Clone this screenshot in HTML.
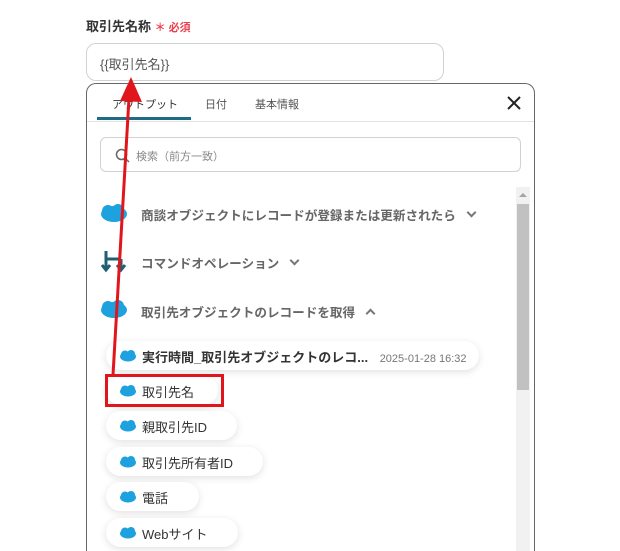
<!DOCTYPE html>
<html style="width:620px;height:551px;overflow:hidden"><head><meta charset="utf-8"><style>
*{margin:0;padding:0;box-sizing:border-box}
body{width:620px;height:551px;background:#fff;position:relative;overflow:hidden;font-family:"Liberation Sans","Noto Sans CJK JP",sans-serif}
.a{position:absolute}
.lbl{left:86px;top:16px;font-size:13px;font-weight:bold;color:#333}
.req{color:#e8414d;font-size:11px;font-weight:bold}
.inp{left:86px;top:43px;width:358px;height:38px;border:1px solid #cfd2d8;border-radius:10px;font-size:13px;color:#555;padding:10px 0 0 13px}
.panel{left:86px;top:83px;width:449px;height:468px;border:1px solid #666;border-bottom:none;border-radius:10px 10px 0 0}
.tab{top:96px;font-size:11px;color:#555}
.search{left:100px;top:137px;width:421px;height:35px;border:1px solid #cfd2d8;border-radius:6px;font-size:11px;color:#888;padding:10px 0 0 35px}
.sec{left:141px;font-size:12.6px;font-weight:bold;color:#666}
.pill{left:106px;height:29px;border-radius:15px;background:#fff;box-shadow:0 2px 8px rgba(0,0,0,.12);font-size:13px;color:#333;padding:6px 14px 0 36px;white-space:nowrap}
.pill svg{position:absolute;left:13px;top:9px}
.chev{display:inline-block;width:7px;height:7px;border-right:2px solid #777;border-bottom:2px solid #777;transform:rotate(45deg);margin-left:12px;position:relative;top:-4px}
.up{transform:rotate(-135deg);top:0}
</style></head><body>
<div class="a lbl">取引先名称 <span class="req">＊ 必須</span></div>
<div class="a inp">{{取引先名}}</div>
<div class="a panel"></div>
<div class="a tab" style="left:112px;color:#333">アウトプット</div>
<div class="a tab" style="left:205px">日付</div>
<div class="a tab" style="left:255px">基本情報</div>
<div class="a" style="left:97px;top:117px;width:94px;height:3px;background:#1e6b86"></div>
<div class="a" style="left:87px;top:121px;width:447px;height:1px;background:#e3e3e3"></div>
<svg class="a" style="left:507px;top:96px" width="14" height="14"><path d="M1 1L13 13M13 1L1 13" stroke="#222" stroke-width="2"/></svg>
<div class="a search">検索（前方一致）</div>
<svg class="a" style="left:115px;top:148px" width="15" height="15"><circle cx="6.5" cy="6.5" r="5" fill="none" stroke="#666" stroke-width="1.5"/><path d="M10 10L14 14" stroke="#666" stroke-width="1.5"/></svg>
<div class="a" style="left:516px;top:187px;width:14px;height:364px;background:#f1f1f1"></div>
<div class="a" style="left:517px;top:204px;width:12px;height:186px;background:#c1c1c1"></div>
<svg class="a" style="left:519px;top:192px" width="8" height="6"><path d="M0 5L4 1L8 5Z" fill="#a3a3a3"/></svg>
<svg class="a" style="left:100px;top:203px" width="28" height="20"><ellipse cx="14" cy="11" rx="13" ry="8" fill="#1ea1df"/><circle cx="8" cy="8" r="6" fill="#1ea1df"/><circle cx="18" cy="7" r="6" fill="#1ea1df"/></svg>
<div class="a sec" style="top:205px">商談オブジェクトにレコードが登録または更新されたら<span class="chev"></span></div>
<svg class="a" style="left:101px;top:249px" width="26" height="26"><path d="M5 2V20M1 16L5 21L9 16M5 10H20M20 10V20M16 16L20 21L24 16" stroke="#1e5f74" stroke-width="3" fill="none"/></svg>
<div class="a sec" style="top:253px">コマンドオペレーション<span class="chev"></span></div>
<svg class="a" style="left:100px;top:299px" width="28" height="20"><ellipse cx="14" cy="11" rx="13" ry="8" fill="#1ea1df"/><circle cx="8" cy="8" r="6" fill="#1ea1df"/><circle cx="18" cy="7" r="6" fill="#1ea1df"/></svg>
<div class="a sec" style="top:302px">取引先オブジェクトのレコードを取得<span class="chev up"></span></div>
<div class="a pill" style="top:341px;width:373px;font-weight:bold"><svg width="18" height="12"><ellipse cx="9" cy="6.5" rx="8" ry="5" fill="#1ea1df"/><circle cx="6" cy="4.5" r="4" fill="#1ea1df"/><circle cx="12" cy="4" r="4" fill="#1ea1df"/></svg>実行時間_取引先オブジェクトのレコ... <span style="font-weight:normal;font-size:11px;color:#777;margin-left:8px">2025-01-28 16:32</span></div>
<div class="a pill" style="top:376px;width:112px"><svg width="18" height="12"><ellipse cx="9" cy="6.5" rx="8" ry="5" fill="#1ea1df"/><circle cx="6" cy="4.5" r="4" fill="#1ea1df"/><circle cx="12" cy="4" r="4" fill="#1ea1df"/></svg>取引先名</div>
<div class="a pill" style="top:411px;width:131px"><svg width="18" height="12"><ellipse cx="9" cy="6.5" rx="8" ry="5" fill="#1ea1df"/><circle cx="6" cy="4.5" r="4" fill="#1ea1df"/><circle cx="12" cy="4" r="4" fill="#1ea1df"/></svg>親取引先ID</div>
<div class="a pill" style="top:447px;width:157px"><svg width="18" height="12"><ellipse cx="9" cy="6.5" rx="8" ry="5" fill="#1ea1df"/><circle cx="6" cy="4.5" r="4" fill="#1ea1df"/><circle cx="12" cy="4" r="4" fill="#1ea1df"/></svg>取引先所有者ID</div>
<div class="a pill" style="top:482px;width:93px"><svg width="18" height="12"><ellipse cx="9" cy="6.5" rx="8" ry="5" fill="#1ea1df"/><circle cx="6" cy="4.5" r="4" fill="#1ea1df"/><circle cx="12" cy="4" r="4" fill="#1ea1df"/></svg>電話</div>
<div class="a pill" style="top:518px;width:132px"><svg width="18" height="12"><ellipse cx="9" cy="6.5" rx="8" ry="5" fill="#1ea1df"/><circle cx="6" cy="4.5" r="4" fill="#1ea1df"/><circle cx="12" cy="4" r="4" fill="#1ea1df"/></svg>Webサイト</div>
<div class="a" style="left:105px;top:374px;width:119px;height:33px;border:3px solid #e0161c"></div>
<svg class="a" style="left:0;top:0" width="620" height="551"><path d="M113 375L129 98" stroke="#e0161c" stroke-width="3"/><path d="M131 77L142 102L120 101Z" fill="#e0161c"/></svg>
</body></html>
